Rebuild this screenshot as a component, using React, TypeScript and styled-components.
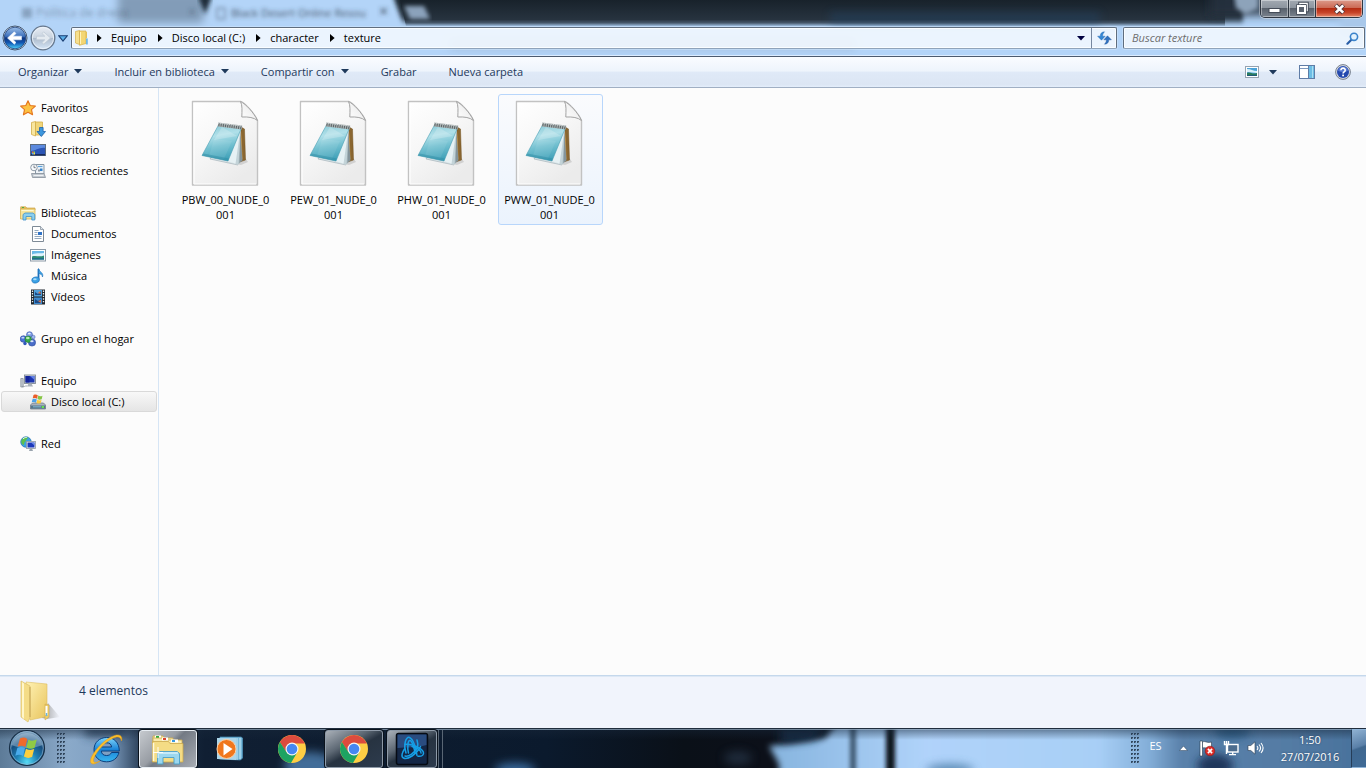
import React from 'react';
import styled, { createGlobalStyle, css } from 'styled-components';

const GlobalStyle = createGlobalStyle`
  *, *::before, *::after { box-sizing: border-box; }
  html, body { margin: 0; padding: 0; }
  body {
    font-family: "Open Sans", "Noto Sans", sans-serif;
    font-size: 11px;
    color: #000;
    background: #fcfcfc;
    overflow: hidden;
  }
  button {
    font: inherit; color: inherit; background: none; border: 0; padding: 0; margin: 0;
    display: inline-flex; align-items: center; justify-content: center; cursor: default;
  }
  svg { display: block; flex: none; }
  ul { list-style: none; margin: 0; padding: 0; }
`;

const Desktop = styled.div`
  display: flex;
  flex-direction: column;
  min-height: 100vh;
`;

/* ---------- glass frame ---------- */

const Backdrop = styled.svg`
  position: absolute;
  inset: 0;
  width: 100%;
  height: 100%;
`;

const GlassFrame = styled.header`
  position: relative;
  height: 57px;
  background: #b3d4f8;
  border-bottom: 1px solid #4c5a6e;
  overflow: hidden;
`;

const CaptionRow = styled.div`
  position: relative;
  display: flex;
  justify-content: flex-end;
  height: 26px;
  padding-right: 3px;
`;

const CaptionGroup = styled.div`
  display: flex;
  height: 18px;
  border: 1px solid #2f3742;
  border-top: 0;
  border-radius: 0 0 5px 5px;
  box-shadow: 0 0 0 1px rgba(255, 255, 255, 0.35);
  overflow: hidden;
`;

const CaptionButton = styled.button<{ $tone: 'glass' | 'close' }>`
  width: ${(p) => (p.$tone === 'close' ? 47 : 27)}px;
  box-shadow: inset 0 0 0 1px rgba(255, 255, 255, 0.4);
  background: ${(p) =>
    p.$tone === 'close'
      ? 'linear-gradient(#dc9a8a 0%, #cc6a55 45%, #b52c12 50%, #c8452a 75%, #e58a6c 100%)'
      : 'linear-gradient(#a2a9b2 0%, #8d959f 45%, #59616c 50%, #7a838e 100%)'};
  & + & { border-left: 1px solid #2f3742; }
`;

const NavRow = styled.div`
  position: relative;
  display: flex;
  align-items: center;
  height: 24px;
  padding: 0 1px 0 2px;
`;

const HistoryButtons = styled.div`
  display: flex;
  align-items: center;
  width: 69px;
  gap: 2px;
`;

const fieldBox = css`
  display: flex;
  align-items: center;
  height: 22px;
  border: 1px solid #5f6d7e;
  border-bottom-color: #8fa3ba;
  border-radius: 2px;
  background: rgba(243, 248, 254, 0.88);
  box-shadow: inset 0 0 0 1px #fafdff, 0 0 0 1px rgba(214, 234, 255, 0.45);
`;

const AddressBar = styled.nav`
  ${fieldBox}
  flex: 1;
  min-width: 0;
  padding-left: 2px;
`;

const Crumbs = styled.ol`
  display: flex;
  align-items: center;
  list-style: none;
  margin: 0 auto 0 7px;
  padding: 0 0 1px;
`;

const Crumb = styled.li`
  display: flex;
  align-items: center;
  gap: 9px;
  margin-right: 11px;
  white-space: nowrap;
`;

const DropButton = styled.button`
  width: 20px;
  height: 20px;
`;

const RefreshButton = styled.button`
  width: 25px;
  height: 20px;
  border-left: 1px solid #7687a0;
`;

const SearchBox = styled.label`
  ${fieldBox}
  width: 242px;
  margin-left: 6px;
  padding: 0 5px 0 8px;
`;

const SearchInput = styled.input`
  flex: 1;
  min-width: 0;
  border: 0;
  padding: 0 0 1px;
  background: transparent;
  font: italic 11px "Open Sans", "Noto Sans", sans-serif;
  color: #222;
  outline: none;
  &::placeholder { color: #6d6d6d; opacity: 1; }
`;

/* ---------- command bar ---------- */

const CommandBar = styled.div`
  display: flex;
  align-items: center;
  height: 31px;
  padding: 0 15px 0 18px;
  gap: 32px;
  color: #1e395b;
  background: linear-gradient(#fafcff 0%, #eef4fc 46%, #dfe9f7 52%, #dce6f4 92%, #e4eefb 100%);
  border-bottom: 1px solid #a0afc3;
`;

const Command = styled.button`
  gap: 6px;
  height: 24px;
  padding-bottom: 2px;
  white-space: nowrap;
`;

const ViewTools = styled.div`
  display: flex;
  align-items: center;
  margin-left: auto;
  gap: 20px;
`;

const ViewPicker = styled.div`
  display: flex;
  align-items: center;
  gap: 10px;
  margin-right: 2px;
`;

/* ---------- body ---------- */

const Body = styled.div`
  display: flex;
  flex: 1;
  min-height: 0;
  background: #fcfcfc;
`;

const Sidebar = styled.nav`
  width: 159px;
  padding-top: 9px;
  border-right: 1px solid #d6e5f5;
`;

const TreeGroup = styled.ul`
  margin-bottom: 21px;
`;

const TreeRow = styled.a<{ $child?: boolean; $selected?: boolean }>`
  display: flex;
  align-items: center;
  gap: 5px;
  height: 21px;
  margin: 0 1px;
  padding-left: ${(p) => (p.$child ? 28 : 18)}px;
  border: 1px solid ${(p) => (p.$selected ? '#d9d9d9' : 'transparent')};
  border-radius: 3px;
  background: ${(p) => (p.$selected ? 'linear-gradient(#f8f8f8, #e5e5e5)' : 'none')};
  color: #000;
  text-decoration: none;
  white-space: nowrap;
`;

const FileGrid = styled.main`
  display: flex;
  flex-wrap: wrap;
  align-content: flex-start;
  flex: 1;
  gap: 3px;
  padding: 6px 15px;
`;

const FileTile = styled.button<{ $hover?: boolean }>`
  flex-direction: column;
  justify-content: flex-start;
  width: 105px;
  height: 131px;
  padding: 5px 2px 0 0;
  gap: 5px;
  line-height: 15px;
  border: 1px solid ${(p) => (p.$hover ? '#b8d6fb' : 'transparent')};
  border-radius: 3px;
  background: ${(p) => (p.$hover ? 'linear-gradient(#fafbfd, #ebf3fd)' : 'none')};
`;

const DetailsPane = styled.footer`
  display: flex;
  align-items: flex-start;
  gap: 19px;
  height: 53px;
  padding: 4px 18px;
  background: #f1f4fc;
  border-top: 1px solid #c5d8ec;
  box-shadow: inset 0 1px 0 #dde8f5;
  color: #1e395b;
  font-size: 12px;
  line-height: 22px;
`;

/* ---------- taskbar ---------- */

const Taskbar = styled.div`
  position: relative;
  display: flex;
  align-items: center;
  height: 40px;
  background: #0b1522;
  overflow: hidden;
`;

const TaskbarRow = styled.div`
  position: relative;
  display: flex;
  align-items: center;
  flex: 1;
  height: 40px;
  padding-left: 8px;
`;

const TaskList = styled.div`
  display: flex;
  align-items: center;
  gap: 4px;
  margin-left: 11px;
`;

const TaskButton = styled.button<{ $state: 'idle' | 'open' | 'active'; $narrow?: boolean }>`
  width: ${(p) => (p.$narrow ? 50 : 58)}px;
  height: 38px;
  margin-top: 1px;
  border-radius: 3px;
  ${(p) =>
    p.$state !== 'idle' &&
    css`
      border: 1px solid ${p.$state === 'active' ? '#e6ecf2' : '#8e9aa8'};
      box-shadow: 0 0 0 1px #0a121c;
      background: ${p.$state === 'active'
        ? 'linear-gradient(135deg, #c5c9ce 0%, #989da4 42%, #737a84 50%, #a8adb4 100%)'
        : 'linear-gradient(150deg, #a9b0b8 0%, #5d6874 35%, #273341 52%, #2d3b4d 100%)'};
    `}
`;

const StackEdges = styled.div`
  width: 5px;
  height: 38px;
  margin: 1px 0 0 -3px;
  border: solid #596674;
  border-width: 0 1px;
`;

const Tray = styled.div`
  display: flex;
  align-items: center;
  margin-left: auto;
  color: #fff;
`;

const Language = styled.button`
  width: 31px;
  height: 30px;
  padding-bottom: 5px;
`;

const TrayButton = styled.button`
  width: 24px;
  height: 30px;
`;

const Clock = styled.time`
  width: 84px;
  text-align: center;
  line-height: 17px;
  padding-left: 2px;
  text-shadow: 0 0 2px rgba(20, 40, 70, 0.7);
`;

const ShowDesktop = styled.button`
  width: 15px;
  height: 39px;
  border: 1px solid #8fb4d8;
  border-left-color: #253d58;
  border-right: 0;
  background: linear-gradient(160deg, #8fb1d2 0%, #5a80a8 45%, #3f678f 50%, #3f6a96 100%);
`;

/* ---------- small glyphs ---------- */

const Down = ({ color = '#1e395b' }: { color?: string }) => (
  <svg width="8" height="5" viewBox="0 0 8 5"><path d="M0 0h8L4 4.6z" fill={color} /></svg>
);
const Right = () => (
  <svg width="5" height="8" viewBox="0 0 5 8"><path d="M0 0v8l4.6-4z" fill="#000" /></svg>
);

const gripRows = [0, 4, 8, 12, 16, 20, 24, 28];
const Grip = () => (
  <svg width="9" height="31" viewBox="0 0 9 31" aria-hidden="true">
    {gripRows.map((y) => (
      <g key={y}>
        <path d={`M0 ${y}h2v2h-2zM3 ${y}h2v2h-2zM6 ${y}h2v2h-2z`} fill="#22364c" opacity=".85" />
        <path d={`M1 ${y + 1}h1v1h-1zM4 ${y + 1}h1v1h-1zM7 ${y + 1}h1v1h-1z`} fill="#a9c0d8" opacity=".45" />
      </g>
    ))}
  </svg>
);

const BackIcon = () => (
  <svg width="26" height="26" viewBox="0 0 26 26">
    <defs>
      <linearGradient id="bk" x1="0" y1="0" x2="0" y2="1">
        <stop offset="0" stopColor="#9cbfe8" /><stop offset=".42" stopColor="#3e71bd" />
        <stop offset=".5" stopColor="#10367f" /><stop offset=".72" stopColor="#1157b3" /><stop offset="1" stopColor="#4fd2fb" />
      </linearGradient>
    </defs>
    <circle cx="13" cy="13" r="12" fill="#e6eef8" stroke="#42566f" />
    <circle cx="13" cy="13" r="10.8" fill="url(#bk)" stroke="#1d3f78" strokeWidth=".8" />
    <path d="M5.500 13l6.800-6.200 1.700 1.700-2.800 2.700h8.300v3.600h-8.300l2.800 2.700-1.700 1.700z" fill="#fff" stroke="#e7f2ff" strokeWidth=".6" strokeLinejoin="round" />
  </svg>
);

const ForwardIcon = () => (
  <svg width="26" height="26" viewBox="0 0 26 26">
    <defs>
      <linearGradient id="fw" x1="0" y1="0" x2="0" y2="1">
        <stop offset="0" stopColor="#e9eef5" /><stop offset=".48" stopColor="#c9d3df" />
        <stop offset=".52" stopColor="#aebccd" /><stop offset="1" stopColor="#d8e8f9" />
      </linearGradient>
    </defs>
    <circle cx="13" cy="13" r="11.8" fill="url(#fw)" stroke="#66778c" strokeWidth="1.300" />
    <circle cx="13" cy="13" r="10.600" fill="none" stroke="#edf4fb" strokeWidth=".8" />
    <path d="M20.500 13l-6.800-6.200-1.700 1.700 2.800 2.700H6.500v3.600h8.300L12 17.500l1.700 1.700z" fill="#e4eaf0" stroke="#bcc7d4" strokeWidth=".7" strokeLinejoin="round" />
  </svg>
);

const HistoryDrop = () => (
  <svg width="10" height="7" viewBox="0 0 10 7"><path d="M.8.8h8.4L5 6z" fill="#58aee8" stroke="#1b3f73" strokeWidth="1.100" /></svg>
);

const RefreshIcon = () => (
  <svg width="15" height="14" viewBox="0 0 15 14">
    <path d="M7.500.8C5.200.8 3.300 2.200 3.300 4.600V5.200H.6L4.500 9.200 8.200 5.200H5.600C5.600 3.500 6 2.500 7.500.8z" fill="#3487d4" stroke="#2366ab" strokeWidth=".4" />
    <path d="M7.500 13.200c2.300 0 4.200-1.400 4.200-3.800V8.800h2.700L10.500 4.800 6.800 8.800h2.600c0 1.700-.4 2.700-1.900 4.400z" fill="#2f72c0" stroke="#1f4f94" strokeWidth=".4" />
  </svg>
);

const MagnifierIcon = () => (
  <svg width="13" height="13" viewBox="0 0 13 13">
    <path d="M5.400 7.800L1.400 11.700" stroke="#2a5ea6" strokeWidth="2.200" strokeLinecap="round" />
    <circle cx="8" cy="4.800" r="3.600" fill="#e3f2fd" stroke="#3b83cb" strokeWidth="1.600" />
  </svg>
);

const ViewIcon = () => (
  <svg width="14" height="12" viewBox="0 0 14 12">
    <rect x=".5" y=".5" width="13" height="11" fill="#fff" stroke="#96a3b1" />
    <rect x="2" y="2" width="10" height="8" fill="#4ba2d8" />
    <path d="M2 3c4 0 6 2 10 2v2L2 6z" fill="#d8f0fa" />
    <path d="M2 7c3-2 5 2 10 0v3H2z" fill="#2b7a5a" /><path d="M2 9h10v1H2z" fill="#1e5a78" />
  </svg>
);

const PreviewIcon = () => (
  <svg width="16" height="14" viewBox="0 0 16 14">
    <rect x=".5" y=".5" width="15" height="13" fill="#fff" stroke="#5f7ca6" />
    <path d="M1 3.500h9" stroke="#7d98bd" /><rect x="10" y="1" width="5" height="12" fill="#6dbde4" />
    <path d="M9.500 1v12" stroke="#5f7ca6" /><path d="M13.500 1v12" stroke="#a9def3" />
  </svg>
);

const HelpIcon = () => (
  <svg width="16" height="16" viewBox="0 0 16 16">
    <circle cx="8" cy="8" r="7.400" fill="#d7dce4" stroke="#777f8d" />
    <circle cx="8" cy="8" r="6" fill="#2449ae" />
    <path d="M3 6.400a5.200 5.200 0 0 1 10 0C10 8.400 6 8.400 3 6.400z" fill="#6d8ee0" opacity=".7" />
    <path d="M5.900 6.300c0-3 4.400-2.800 4.300-.1 0 1.700-2.100 1.500-2.100 3.200" fill="none" stroke="#fff" strokeWidth="1.600" />
    <rect x="7.200" y="10.600" width="1.800" height="1.700" fill="#fff" />
  </svg>
);

/* ---------- tree icons ---------- */

const icons: Record<string, React.ReactNode> = {
  folder: (
    <>
      <path d="M1.500 1.500l4-1v14l-4-1.500z" fill="#f7e08e" stroke="#d3ae4a" strokeWidth=".7" />
      <path d="M5.500 1h6.500v12.500l-6.500 1.800z" fill="#f3d673" stroke="#d6b04c" strokeWidth=".7" />
      <path d="M6.500 2v12" stroke="#fff3bb" /><path d="M12 8.500h1.800v6H12z" fill="#70b7e4" />
      <path d="M12.500 2v6" stroke="#e1c05b" />
    </>
  ),
  star: (
    <path d="M8 .8l2.200 4.700 5.200.6-3.900 3.500 1.100 5.200L8 12.200l-4.600 2.600 1.100-5.200L.6 6.100l5.200-.6z" fill="#fcc243" stroke="#e5751d" strokeWidth="1.100" strokeLinejoin="round" />
  ),
  downloads: (
    <>
      <path d="M1.500 1.500l4-1v14.500l-4-1.500z" fill="#f8e69f" stroke="#d3ae4a" strokeWidth=".8" />
      <path d="M5.500 1h7v13h-7z" fill="#f1d67a" stroke="#d3ae4a" strokeWidth=".8" />
      <path d="M9.500 6.500h3.600v4h2.400L11.300 15.500 7 10.500h2.500z" fill="#3d97dd" stroke="#1c62ac" strokeWidth=".8" />
    </>
  ),
  desktop: (
    <>
      <rect x=".5" y="2.500" width="15" height="11" fill="#2b55b5" stroke="#5b6b7d" />
      <path d="M1 3h14v3C10 5 5 9 1 9z" fill="#5c8ade" /><path d="M1 12h14v1.500H1z" fill="#182c5e" />
      <path d="M2 9.500h1.500V11H2z" fill="#f06a35" /><path d="M3.500 9.500H5V11H3.500z" fill="#8fd257" />
      <path d="M2 11h1.500v1.500H2z" fill="#57b4f2" /><path d="M3.500 11H5v1.500H3.500z" fill="#f9d650" />
    </>
  ),
  recent: (
    <>
      <path d="M5.500 1.500h8.500v9.500H5.500z" fill="#eef3f8" stroke="#8795a3" />
      <path d="M8 3.500h4.500" stroke="#5ba3dd" strokeWidth="1.200" /><path d="M8 6.500h2v2H8z" fill="#8b98a5" /><path d="M10 5.500h2.500v2.500H10z" fill="#3482ca" />
      <path d="M1.500 10.500h12.500l1.500 4h-13z" fill="#c2c9d0" stroke="#858f9a" strokeWidth=".8" /><path d="M3.500 12.500h10" stroke="#eef1f4" />
      <circle cx="4" cy="4.500" r="3.300" fill="#f8fafc" stroke="#8d99a5" /><path d="M4 2.500v2.200h1.700" fill="none" stroke="#55606c" strokeWidth=".8" />
    </>
  ),
  libraries: (
    <>
      <path d="M.7 4V1.800h5L7 3h8v2z" fill="#e9c25c" stroke="#cda54a" strokeWidth=".7" />
      <path d="M.5 4h14.500v10H.5z" fill="#f8e49a" stroke="#d7b456" strokeWidth=".8" />
      <path d="M1.500 5.500h12" stroke="#fff8d1" /><path d="M2 2.500h2" stroke="#4eaa4a" />
      <path d="M3 15V9.500l2-1.500h8l1.800 1.500V15h-3v-3.500H6V15z" fill="#8ccfef" stroke="#3e91c9" strokeWidth=".8" />
    </>
  ),
  documents: (
    <>
      <path d="M2.500.5h8l3 3v12h-11z" fill="#fff" stroke="#7e8a96" /><path d="M10.500.5v3h3" fill="#dfe5eb" stroke="#7e8a96" strokeWidth=".7" />
      <path d="M4.500 4.500h4M4.500 6.500h3M4.500 8.500h3M4.500 10.500h7M4.500 12.500h7" stroke="#94a9be" /><path d="M8 6h4v3H8z" fill="#2f73c7" />
    </>
  ),
  pictures: (
    <>
      <rect x=".5" y="2.500" width="15" height="11.500" fill="#fff" stroke="#8c99a6" />
      <rect x="2" y="4" width="12" height="8.500" fill="#69b9e8" /><path d="M2 7.500c4-2 7-1 12-1.500v4H2z" fill="#dff3fc" />
      <path d="M2 9.500c4-1.500 7 1 12-1v4H2z" fill="#2e8b74" /><path d="M2 11.300h12v1.200H2z" fill="#1a6292" />
    </>
  ),
  music: (
    <>
      <path d="M8.500 1v10.500" stroke="#1d6fb9" strokeWidth="1.800" /><path d="M8.500.5c.8 3.800 5.500 4 4 8.500-.3-2.500-2-3-4-3.800z" fill="#3fa4e4" stroke="#1d6fb9" strokeWidth=".6" />
      <ellipse cx="5.600" cy="12" rx="3.900" ry="3" transform="rotate(-15 5.600 12)" fill="#3da3e6" stroke="#1d6fb9" strokeWidth=".6" />
      <ellipse cx="4.900" cy="11.200" rx="1.800" ry="1" fill="#a8dcf8" />
    </>
  ),
  videos: (
    <>
      <rect x="1" y=".5" width="14" height="15" fill="#20272e" /><rect x="4" y="1" width="8" height="6.500" fill="#4f9fd9" /><rect x="4" y="8.500" width="8" height="6.500" fill="#3d8bd0" />
      <path d="M5 3l3 2 3-3v4H5zM5 10l3 2 3-2v4H5z" fill="#1d4a86" /><path d="M8 4l2-2 1 3zM8 12l3-1v3z" fill="#d9784e" />
      <path d="M2.500 1.500v13M13.500 1.500v13" stroke="#e9edf0" strokeWidth="1.300" strokeDasharray="1.400 1.200" />
    </>
  ),
  homegroup: (
    <>
      <circle cx="9.500" cy="3.700" r="3" fill="#7d9be4" stroke="#3856a7" strokeWidth=".6" /><circle cx="3.500" cy="8" r="3.300" fill="#4a73d5" stroke="#2a4898" strokeWidth=".6" />
      <circle cx="13.300" cy="6" r="1.800" fill="#9fb7ee" stroke="#3856a7" strokeWidth=".5" /><circle cx="12" cy="11.500" r="3.600" fill="#4a6dc9" stroke="#2a4898" strokeWidth=".6" />
      <circle cx="8.200" cy="8.300" r="3.200" fill="#35a849" stroke="#1e7535" strokeWidth=".6" />
      <ellipse cx="7.800" cy="7" rx="1.800" ry="1.200" fill="#b4ecae" /><ellipse cx="9.300" cy="2.600" rx="1.500" ry=".9" fill="#e4ecfd" />
      <ellipse cx="2.900" cy="6.700" rx="1.500" ry=".9" fill="#c3d4f8" />
      <circle cx="5" cy="12.500" r="1.700" fill="#2f57bb" /><ellipse cx="11.900" cy="10.200" rx="1.700" ry="1" fill="#dce6fc" />
    </>
  ),
  computer: (
    <>
      <path d="M.8 5.500h2.400v8.500H.8z" fill="#c3cad1" stroke="#7e8891" strokeWidth=".7" /><rect x="4.500" y="2" width="11" height="8.500" fill="#d3d8dd" stroke="#818b95" strokeWidth=".9" />
      <rect x="5.500" y="3" width="9" height="6.500" fill="#1d36b0" /><path d="M5.500 3h4v6.500h-4z" fill="#13229b" /><path d="M10 3h4.500v4z" fill="#6381e5" />
      <path d="M8.500 10.500h3l1.500 3H7z" fill="#a8b0b8" /><path d="M2 13.500c2 1 3-1 5-.5" stroke="#8b949d" fill="none" strokeWidth=".8" />
    </>
  ),
  disk: (
    <>
      <path d="M2.500 9h11l2 2v4H.5v-4z" fill="#a9b2bb" stroke="#68737e" strokeWidth=".7" /><path d="M.8 11.500h14.400v3.200H.8z" fill="#56778c" />
      <path d="M3 12.800h8" stroke="#84b7cf" /><path d="M11.700 12h2.300v2h-2.300z" fill="#67e24e" />
      <path d="M3.500 1c2-.8 3-.5 4.300.3l-.8 3.500c-1.300-.8-2.400-1-4.300-.3z" fill="#ea5d2a" /><path d="M8.300 1.600c1.300.8 2.800.8 4.200.1l-.8 3.500c-1.600.7-2.900.5-4.200-.2z" fill="#86c544" />
      <path d="M2.500 5.200c1.900-.7 3-.4 4.300.3l-.8 3.300c-1.400-.8-2.500-.9-4.300-.3z" fill="#4ba2e7" /><path d="M7.300 5.800c1.400.7 2.700.8 4.200.1l-.8 3.300c-1.500.6-2.900.4-4.200-.2z" fill="#fbcb3d" />
    </>
  ),
  network: (
    <>
      <circle cx="6" cy="6" r="5.300" fill="#3c9fe3" stroke="#1b67a9" strokeWidth=".6" /><path d="M2 3.500c2-3 5-2 6-2-1 2-2 2-2.500 4C4 6 4.500 9 3.500 9 1 8 .8 5 2 3.500z" fill="#5cc04e" />
      <path d="M3 2.800c2-1.800 4-1.300 4-1.300" stroke="#e4fbe3" fill="none" />
      <rect x="6.500" y="5.500" width="9" height="7" fill="#eef1f5" stroke="#8e98a3" strokeWidth=".8" /><rect x="7.500" y="6.500" width="7" height="5" fill="#1c38bb" />
      <path d="M11 6.500h3.500v3z" fill="#6d8ce9" /><path d="M10 12.500h2l1 2.500H9z" fill="#9aa4ae" />
    </>
  ),
};

const TreeIcon = ({ name }: { name: string }) => (
  <svg width="16" height="16" viewBox="0 0 16 16">{icons[name]}</svg>
);

const NotepadFile = () => (
  <svg width="69" height="87" viewBox="0 0 69 87">
    <defs>
      <linearGradient id="pg" x1="0" y1="0" x2=".6" y2="1"><stop offset="0" stopColor="#fff" /><stop offset=".5" stopColor="#f7f7f7" /><stop offset="1" stopColor="#ebebeb" /></linearGradient>
      <linearGradient id="cv" x1=".3" y1="0" x2=".5" y2="1"><stop offset="0" stopColor="#8ccbd8" /><stop offset=".3" stopColor="#b0e0e9" /><stop offset=".6" stopColor="#74c1d1" /><stop offset="1" stopColor="#3c9fb7" /></linearGradient>
      <linearGradient id="fo" x1="0" y1="1" x2="1" y2="0"><stop offset="0" stopColor="#fff" /><stop offset=".6" stopColor="#f0f0f0" /><stop offset="1" stopColor="#cfcfcf" /></linearGradient>
    </defs>
    <path d="M1.500 1.500h48c4 1 14 12 17 19v64.500h-65z" fill="url(#pg)" stroke="#c2c2c2" strokeWidth="1.400" strokeLinejoin="round" />
    <path d="M3 3v81h62" fill="none" stroke="#fff" />
    <path d="M49.500 1.500c2 4 1.500 9 1.300 15.500 7-.3 12 .5 15.700 3.500C63 13 55 4 49.500 1.500z" fill="url(#fo)" stroke="#a3a3a3" strokeLinejoin="round" />
    <path d="M18 58l32 7 7-3-4-6z" fill="#c9c9c9" opacity=".8" />
    <path d="M50 27l3.500 2 1 31-6 2z" fill="#8a6630" stroke="#70501e" strokeWidth=".5" />
    <path d="M50.500 31l1 28-3 2z" fill="#b8904c" />
    <path d="M49 27l2.500 33.500-5 4z" fill="#84949b" />
    <path d="M48 27l-1 38-28-6 3-4z" fill="#d9e4e8" stroke="#9cabb2" strokeWidth=".6" />
    <path d="M49.500 29L47.500 64.500 36.500 61z" fill="#e6f1f4" />
    <path d="M49.500 29L48.500 64l-4 0z" fill="#b4c6cc" opacity=".7" />
    <path d="M27.500 25l22.500 4-13 32-26-5.500z" fill="url(#cv)" stroke="#4a9fb3" strokeWidth=".6" />
    <path d="M31 27l15 9-23 4z" fill="#fff" opacity=".2" />
    <path d="M23 39l18 2-8 18-15-3z" fill="#fff" opacity=".08" />
    <path d="M11 55.500l26 5.500 1-2.500-25.500-5z" fill="#328ea6" opacity=".5" />
    <path d="M27 24.500l24 3" stroke="#a9b0b1" strokeWidth="4" />
    <path d="M27.500 24.700l23 3" stroke="#5b6466" strokeWidth="3" strokeDasharray="1 1.200" />
    <path d="M27 23l23.500 3" stroke="#d5dadb" strokeWidth="1" strokeDasharray="1.200 1" />
  </svg>
);

const BigFolder = () => (
  <svg width="42" height="44" viewBox="0 0 42 44">
    <defs><linearGradient id="fd" x1="0" y1="0" x2="1" y2="1"><stop offset="0" stopColor="#fff2b4" /><stop offset="1" stopColor="#e8c45d" /></linearGradient>
      <linearGradient id="sh"><stop offset="0" stopColor="#777" stopOpacity=".7" /><stop offset="1" stopColor="#777" stopOpacity="0" /></linearGradient></defs>
    <path d="M24 38l6-15 12 14-13 2z" fill="url(#sh)" />
    <path d="M8 2l21 2v25l-2 8-15 3z" fill="url(#fd)" stroke="#ddbd61" strokeWidth=".6" />
    <path d="M27 24l4 1v12l-4 3z" fill="#edcc69" stroke="#caa548" strokeWidth=".5" />
    <path d="M28.500 26v9" stroke="#fff" strokeWidth="2" /><path d="M28.500 33v3" stroke="#68b5e2" strokeWidth="1.500" />
    <path d="M3 1l9 5v31l-2 5-7-5z" fill="#f4dc87" stroke="#dcc06c" strokeWidth=".7" /><path d="M4 2v35l2 2V3.500z" fill="#fff6ca" />
    <path d="M12 7v30" stroke="#b9984a" strokeWidth=".8" />
  </svg>
);

/* ---------- taskbar icons ---------- */

const StartOrb = () => (
  <svg width="38" height="38" viewBox="0 0 38 38">
    <defs><radialGradient id="orb" cx=".5" cy=".9" r=".9"><stop offset="0" stopColor="#56dcf5" /><stop offset=".35" stopColor="#1e80b4" /><stop offset=".65" stopColor="#174f80" /><stop offset="1" stopColor="#88a9c4" /></radialGradient></defs>
    <circle cx="19" cy="19" r="17.500" fill="url(#orb)" stroke="#172e45" strokeWidth="1.200" />
    <circle cx="19" cy="19" r="16.300" fill="none" stroke="#9ebfd8" strokeWidth=".8" opacity=".7" />
    <path d="M3.500 16a16 16 0 0 1 31 0c-9 4-22 4-31 0z" fill="#e6f2fb" opacity=".32" />
    <path d="M12 9.500c3-1.500 5-1 7.300.4l-2 8c-2.600-1.600-4.600-1.600-7.600-.4z" fill="#ef6a2c" /><path d="M20.400 10.500c2.600 1.700 5.300 1.400 8.400.1l-2.200 8.200c-3 1.300-5.700 1-8.200-.4z" fill="#8fca45" />
    <path d="M9.400 18.700c3-1.200 5-1.100 7.600.4l-2 8c-2.500-1.600-4.700-1.600-7.700-.4z" fill="#4aabeb" /><path d="M18 19.700c2.600 1.500 5.200 1.600 8.200.4l-2.100 8c-3 1.300-5.600 1-8.200-.5z" fill="#fdcf3e" />
  </svg>
);

const IEIcon = () => (
  <svg width="36" height="34" viewBox="0 0 36 34">
    <defs><linearGradient id="ie" x1="0" y1="0" x2="0" y2="1"><stop offset="0" stopColor="#7ed5fb" /><stop offset=".5" stopColor="#1b83d7" /><stop offset="1" stopColor="#38b6f0" /></linearGradient></defs>
    <path d="M31 20.500h-7.500c-1 2.200-2.600 3-5 3-3.200 0-5-1.700-5.200-4.500h18C31.300 10.500 26 5.500 18.700 5.500 11.500 5.500 6 10.500 6 17.700 6 25 11.300 29.800 18.600 29.800c6.300 0 10.800-3.400 12.400-9.300zM13.400 15c.5-2.800 2.300-4.200 5.200-4.200s4.700 1.400 5 4.200z" fill="url(#ie)" stroke="#0b3f7d" strokeWidth="1" />
    <path d="M33.500 9c1.500-5-2-8.500-10.500-4C13 10 2 24 2.500 29.500 3 33.500 8 32 12 29c-4 2-7 2-6.500-1C6 23 15 11 24.500 6.500c5-2.500 8-2 9 2.500z" fill="#fbc02d" stroke="#e29a12" strokeWidth=".5" />
  </svg>
);

const ExplorerIcon = () => (
  <svg width="34" height="32" viewBox="0 0 34 32">
    <path d="M2 3h10l1.500 2H22v4H2z" fill="#f6e6a0" stroke="#cba94d" strokeWidth=".8" /><path d="M4 2.500h6v3H4z" fill="#fff" /><path d="M5 3h3v2H5z" fill="#2fae43" />
    <path d="M2 5h10l1 2h18v5H2z" fill="#f8e9a9" stroke="#cba94d" strokeWidth=".8" /><path d="M11 4.500h6v3h-6z" fill="#fff" /><path d="M12 5h3v2h-3z" fill="#d94530" />
    <path d="M20 6.500h7v3h-7z" fill="#fff" /><path d="M21 7h3v2h-3z" fill="#3a9be0" />
    <path d="M1.500 8.500h16l1.500 2h13v18.500h-30.500z" fill="#f4dc85" stroke="#cba94d" strokeWidth=".8" /><path d="M2.500 10v18" stroke="#fffadc" strokeWidth="1.500" />
    <path d="M6.500 31V20.500l2.500-2h17l2.500 2V31h-5.500v-6.500H12V31z" fill="#9bd7ef" stroke="#489fc8" strokeWidth=".9" /><path d="M8 20h19" stroke="#ddf4fc" strokeWidth="1.300" />
    <path d="M7 14v11M2 19.500h10" stroke="#fff" strokeWidth=".9" />
  </svg>
);

const PlayerIcon = () => (
  <svg width="28" height="26" viewBox="0 0 28 26">
    <path d="M4 1h21l1.500 1v20l-2 2-21-1z" fill="#76b7d8" stroke="#4c93bb" strokeWidth=".7" /><path d="M1 2h19v22L1 23z" fill="#acd5e9" /><path d="M21 2v22M24 2v21" stroke="#c9ebf7" />
    <circle cx="10.500" cy="13" r="9.500" fill="#f0771d" stroke="#fbd1a8" /><path d="M7.500 7l9 6-9 6.500z" fill="#fff" />
  </svg>
);

const ChromeIcon = () => (
  <svg width="30" height="30" viewBox="0 0 30 30">
    <circle cx="15" cy="15" r="14" fill="#ffce44" />
    <path d="M2.900 8A14 14 0 0 1 27.100 8L27.600 9.500H15L9 18z" fill="#dc4b3e" />
    <path d="M2.900 8A14 14 0 0 0 14 29L20.300 18.300 9.500 18.300z" fill="#1da362" />
    <circle cx="15" cy="15" r="6.500" fill="#f5f5f5" /><circle cx="15" cy="15" r="5.300" fill="#4587f3" />
  </svg>
);

const BattleIcon = () => (
  <svg width="34" height="34" viewBox="0 0 34 34">
    <rect x="1.500" y="1.500" width="31" height="31" rx="2" fill="#142746" stroke="#060b14" strokeWidth="1.500" /><path d="M2.500 2.500h29V13c-11 3-20 2-29 3z" fill="#315a94" opacity=".75" />
    <g fill="none" stroke="#169fe6" strokeWidth="1.500" strokeLinecap="round">
      <path d="M11 21C8 13 11 4 14.500 5.500c3.500 1.500 6.500 10 7.500 18" /><path d="M13.500 21c-1.500-6-.5-13 1.500-12.500s4.500 7.500 5 13" />
      <path d="M10 12.500c9-1 19 5 18.500 9-.4 2.500-3 3-5.500 2.800" /><path d="M17 14.500c6 1.500 9.500 4.500 9 6.500" />
      <path d="M25.500 14.500c-4 8-13 13.500-17 11.500-3-1.500-1-6 1-9" /><path d="M22.500 15.500c-3.500 6-9 9.500-12.500 8.500" />
      <path d="M22 8c1 3 1 5 .5 7.500" />
    </g>
  </svg>
);

const FlagIcon = () => (
  <svg width="17" height="17" viewBox="0 0 17 17">
    <path d="M1 1h2.500v15H1z" fill="#fff" stroke="#26394e" strokeWidth=".6" /><path d="M3.500 2c3-1.500 4 1.500 9 0v6c-4 1.500-6-1-9 0z" fill="#fff" stroke="#26394e" strokeWidth=".6" />
    <circle cx="11" cy="11" r="4.800" fill="#df2f2b" stroke="#8c1716" strokeWidth=".6" /><path d="M8.900 8.900l4.200 4.200M13.100 8.900l-4.200 4.200" stroke="#fff" strokeWidth="1.700" />
  </svg>
);

const NetIcon = () => (
  <svg width="16" height="16" viewBox="0 0 16 16">
    <rect x="4.500" y="4.500" width="10.500" height="7.500" fill="#4c6c8e" stroke="#fff" strokeWidth="1.400" /><path d="M9.700 12v2M6 14.600h7" stroke="#fff" strokeWidth="1.400" />
    <path d="M1.500 1v3.500h4V1M3.500 1v3M3.500 4.500V14" fill="none" stroke="#fff" strokeWidth="1.400" />
  </svg>
);

const VolumeIcon = () => (
  <svg width="17" height="14" viewBox="0 0 17 14">
    <path d="M1 4.500h2.800L8 .8v12.400L3.800 9.500H1z" fill="#fff" stroke="#26394e" strokeWidth=".6" />
    <path d="M10 5c.9 1 .9 3 0 4M12 3.500c1.800 2 1.800 5 0 7M14 2c2.500 3 2.500 7 0 10" fill="none" stroke="#fff" strokeWidth="1.100" />
  </svg>
);

const FrameBackdrop = () => (
  <Backdrop viewBox="0 0 1366 56" preserveAspectRatio="none" aria-hidden="true">
    <defs>
      <linearGradient id="dk" x1="0" y1="0" x2="0" y2="1"><stop offset="0" stopColor="#18222b" /><stop offset=".75" stopColor="#27333f" /><stop offset=".88" stopColor="#46586b" /><stop offset="1" stopColor="#9ab9da" stopOpacity=".9" /></linearGradient>
      <filter id="b2" x="-30%" y="-60%" width="160%" height="220%"><feGaussianBlur stdDeviation="4" /></filter>
      <filter id="b1" x="-5%" y="-60%" width="110%" height="220%"><feGaussianBlur stdDeviation="2.200" /></filter>
    </defs>
    <rect width="1366" height="56" fill="#b3d4f8" />
    <path d="M118-8h92l-8 31h-84z" fill="#829cb8" filter="url(#b2)" />
    <path d="M198-4h14l-7 18z" fill="#1c2b39" filter="url(#b1)" />
    <path d="M393-4h850v28H403z" fill="url(#dk)" filter="url(#b1)" />
    <path d="M400 0h825v26H406z" fill="url(#dk)" />
    <path d="M1210-10h140v26h-140z" fill="#27333f" opacity=".8" filter="url(#b2)" />
    <rect x="830" y="12" width="270" height="12" fill="#23466b" opacity=".4" filter="url(#b2)" />
    <path d="M404 6h20l6 13h-20z" fill="#8ba2bb" filter="url(#b1)" />
    <path d="M1234-6h24v14l-12 6-10-6z" fill="#8da3ba" filter="url(#b1)" />
    <path d="M1340-10h40v46h-40z" fill="#a9c8ea" filter="url(#b2)" />
    <g filter="url(#b1)" fontFamily="Open Sans, sans-serif" fontSize="12" fill="#354252">
      <text x="36" y="17" opacity=".45">Política de dreos</text>
      <text x="231" y="17" fontSize="11" opacity=".9">Black Desert Online Resou</text>
      <text x="379" y="17" fontSize="16">×</text><text x="188" y="17" fontSize="14" opacity=".5">×</text>
      <path d="M22 8h10v10H22z" opacity=".35" /><path d="M217 8h8v11h-8z" fill="none" stroke="#52647a" />
    </g>
    <rect x="450" y="39" width="405" height="10" fill="#8a95a7" opacity=".35" filter="url(#b2)" />
    <rect y="55" width="1366" height="1" fill="#dcecff" />
  </Backdrop>
);

const TaskbarBackdrop = () => (
  <Backdrop viewBox="0 0 1366 40" preserveAspectRatio="none" aria-hidden="true">
    <defs>
      <linearGradient id="tb">
        <stop offset="0" stopColor="#5d7b98" /><stop offset=".05" stopColor="#8aa9c9" /><stop offset=".08" stopColor="#7f9fc2" /><stop offset=".105" stopColor="#22364e" />
        <stop offset=".15" stopColor="#101f33" /><stop offset=".4" stopColor="#0b1a2d" /><stop offset=".5" stopColor="#0a1018" /><stop offset=".56" stopColor="#0c1019" />
      </linearGradient>
      <linearGradient id="tr"><stop offset="0" stopColor="#86b4de" /><stop offset=".25" stopColor="#b0d3fa" /><stop offset=".52" stopColor="#a8cff6" /><stop offset=".6" stopColor="#83aed8" /><stop offset=".65" stopColor="#5a81aa" /><stop offset=".82" stopColor="#537ba4" /><stop offset="1" stopColor="#426b96" /></linearGradient>
      <linearGradient id="shade" x1="0" y1="0" x2="0" y2="1"><stop offset="0" stopColor="#17273a" stopOpacity=".55" /><stop offset=".3" stopColor="#17273a" stopOpacity="0" /></linearGradient>
      <filter id="b5" x="-50%" y="-80%" width="200%" height="260%"><feGaussianBlur stdDeviation="5" /></filter>
      <filter id="b6" x="-10%" y="-30%" width="120%" height="160%"><feGaussianBlur stdDeviation="3" /></filter>
      <filter id="b7" x="-100%" y="-10%" width="300%" height="120%"><feGaussianBlur stdDeviation="2" /></filter>
    </defs>
    <rect width="1366" height="40" fill="url(#tb)" />
    <ellipse cx="310" cy="38" rx="26" ry="14" fill="#426d99" filter="url(#b5)" />
    <ellipse cx="515" cy="42" rx="20" ry="7" fill="#3b6b9d" filter="url(#b5)" />
    <path d="M85-5h40v14H85z" fill="#203650" opacity=".7" filter="url(#b5)" />
    <path d="M779 60V36l-10-18 26-3 30-5 18-22h560v72z" fill="url(#tr)" filter="url(#b6)" />
    <path d="M780 0h46l-12 12-34 3z" fill="#173150" opacity=".8" filter="url(#b5)" />
    <ellipse cx="950" cy="42" rx="24" ry="6" fill="#42759e" opacity=".75" filter="url(#b5)" />
    <ellipse cx="738" cy="30" rx="14" ry="7" fill="#31455b" opacity=".5" filter="url(#b5)" />
    <rect x="850" y="-10" width="6" height="60" fill="#3d566f" filter="url(#b7)" />
    <rect x="886" y="-10" width="9" height="60" fill="#0c151e" filter="url(#b7)" />
    <ellipse cx="1215" cy="38" rx="18" ry="12" fill="#122c50" opacity=".85" filter="url(#b5)" />
    <ellipse cx="1232" cy="4" rx="18" ry="7" fill="#28567e" opacity=".8" filter="url(#b5)" />
    <rect width="1366" height="40" fill="url(#shade)" />
    <rect width="1366" height="1" fill="#202d3d" /><rect y="1" width="1366" height="1" fill="#a5bacf" opacity=".65" />
  </Backdrop>
);

/* ---------- data ---------- */

type Node = { icon: string; label: string; selected?: boolean };
const tree: { head: Node; items: Node[] }[] = [
  { head: { icon: 'star', label: 'Favoritos' }, items: [
    { icon: 'downloads', label: 'Descargas' }, { icon: 'desktop', label: 'Escritorio' }, { icon: 'recent', label: 'Sitios recientes' } ] },
  { head: { icon: 'libraries', label: 'Bibliotecas' }, items: [
    { icon: 'documents', label: 'Documentos' }, { icon: 'pictures', label: 'Imágenes' }, { icon: 'music', label: 'Música' }, { icon: 'videos', label: 'Vídeos' } ] },
  { head: { icon: 'homegroup', label: 'Grupo en el hogar' }, items: [] },
  { head: { icon: 'computer', label: 'Equipo' }, items: [{ icon: 'disk', label: 'Disco local (C:)', selected: true }] },
  { head: { icon: 'network', label: 'Red' }, items: [] },
];

const commands = [
  { label: 'Organizar', menu: true }, { label: 'Incluir en biblioteca', menu: true }, { label: 'Compartir con', menu: true },
  { label: 'Grabar', menu: false }, { label: 'Nueva carpeta', menu: false },
];

const crumbs = ['Equipo', 'Disco local (C:)', 'character', 'texture'];
const files = ['PBW_00_NUDE_0', 'PEW_01_NUDE_0', 'PHW_01_NUDE_0', 'PWW_01_NUDE_0'];

export default function App() {
  return (
    <>
      <GlobalStyle />
      <Desktop>
        <GlassFrame>
          <FrameBackdrop />
          <CaptionRow>
            <CaptionGroup>
              <CaptionButton $tone="glass" aria-label="Minimizar">
                <svg width="13" height="17" viewBox="0 0 13 17"><rect x="1" y="8.500" width="11" height="4" fill="#fff" stroke="#454c58" /></svg>
              </CaptionButton>
              <CaptionButton $tone="glass" aria-label="Restaurar">
                <svg width="13" height="15" viewBox="0 0 13 15">
                  <path d="M4 2.500h7v7H4z" fill="none" stroke="#454c58" strokeWidth="3.500" /><path d="M4 2.500h7v7H4z" fill="none" stroke="#fff" strokeWidth="1.600" />
                  <path d="M2 5h7v7H2z" fill="#5a626e" stroke="#454c58" strokeWidth="3.500" /><path d="M2 5h7v7H2z" fill="#5a626e" stroke="#fff" strokeWidth="2" />
                </svg>
              </CaptionButton>
              <CaptionButton $tone="close" aria-label="Cerrar">
                <svg width="13" height="12" viewBox="0 0 13 12">
                  <path d="M2.500 2l8 8M10.500 2l-8 8" stroke="#5a3a3d" strokeWidth="4.500" /><path d="M2.800 2.300l7.400 7.400M10.200 2.300l-7.400 7.400" stroke="#fff" strokeWidth="2.600" />
                </svg>
              </CaptionButton>
            </CaptionGroup>
          </CaptionRow>
          <NavRow>
            <HistoryButtons>
              <button aria-label="Atrás"><BackIcon /></button>
              <button aria-label="Adelante"><ForwardIcon /></button>
              <button aria-label="Páginas recientes"><HistoryDrop /></button>
            </HistoryButtons>
            <AddressBar aria-label="Dirección">
              <TreeIcon name="folder" />
              <Crumbs>
                {crumbs.map((c) => (
                  <Crumb key={c}><Right /><button>{c}</button></Crumb>
                ))}
              </Crumbs>
              <DropButton aria-label="Ubicaciones anteriores"><Down color="#000040" /></DropButton>
              <RefreshButton aria-label="Actualizar"><RefreshIcon /></RefreshButton>
            </AddressBar>
            <SearchBox>
              <SearchInput type="text" placeholder="Buscar texture" aria-label="Buscar texture" />
              <MagnifierIcon />
            </SearchBox>
          </NavRow>
        </GlassFrame>

        <CommandBar>
          {commands.map((c) => (
            <Command key={c.label}>{c.label}{c.menu && <Down />}</Command>
          ))}
          <ViewTools>
            <ViewPicker>
              <button aria-label="Cambiar la vista"><ViewIcon /></button>
              <button aria-label="Más opciones"><Down /></button>
            </ViewPicker>
            <button aria-label="Panel de vista previa"><PreviewIcon /></button>
            <button aria-label="Ayuda"><HelpIcon /></button>
          </ViewTools>
        </CommandBar>

        <Body>
          <Sidebar aria-label="Navegación">
            {tree.map((g) => (
              <TreeGroup key={g.head.label}>
                <li><TreeRow href="#"><TreeIcon name={g.head.icon} />{g.head.label}</TreeRow></li>
                {g.items.map((n) => (
                  <li key={n.label}>
                    <TreeRow href="#" $child $selected={n.selected}><TreeIcon name={n.icon} />{n.label}</TreeRow>
                  </li>
                ))}
              </TreeGroup>
            ))}
          </Sidebar>
          <FileGrid>
            {files.map((f, i) => (
              <FileTile key={f} $hover={i === files.length - 1}>
                <NotepadFile />
                <span>{f}<br />001</span>
              </FileTile>
            ))}
          </FileGrid>
        </Body>

        <DetailsPane>
          <BigFolder />
          <span>4 elementos</span>
        </DetailsPane>

        <Taskbar>
          <TaskbarBackdrop />
          <TaskbarRow>
            <button aria-label="Inicio"><StartOrb /></button>
            <TaskList>
              <Grip />
            </TaskList>
            <TaskList>
              <TaskButton $state="idle" aria-label="Internet Explorer"><IEIcon /></TaskButton>
              <TaskButton $state="active" aria-label="Explorador de Windows"><ExplorerIcon /></TaskButton>
              <TaskButton $state="idle" aria-label="Reproductor"><PlayerIcon /></TaskButton>
              <TaskButton $state="idle" aria-label="Chrome"><ChromeIcon /></TaskButton>
              <TaskButton $state="open" aria-label="Chrome, ventana"><ChromeIcon /></TaskButton>
              <TaskButton $state="open" $narrow aria-label="Battle.net"><BattleIcon /></TaskButton>
              <StackEdges />
            </TaskList>
            <Tray>
              <Grip />
              <Language>ES</Language>
              <TrayButton aria-label="Mostrar iconos ocultos">
                <svg width="9" height="6" viewBox="0 0 9 6"><path d="M.5 5.500L4.500 1l4 4.500z" fill="#fff" stroke="#2b4159" strokeWidth=".5" /></svg>
              </TrayButton>
              <TrayButton aria-label="Centro de actividades"><FlagIcon /></TrayButton>
              <TrayButton aria-label="Red"><NetIcon /></TrayButton>
              <TrayButton aria-label="Volumen"><VolumeIcon /></TrayButton>
              <Clock>1:50<br />27/07/2016</Clock>
              <ShowDesktop aria-label="Mostrar escritorio" />
            </Tray>
          </TaskbarRow>
        </Taskbar>
      </Desktop>
    </>
  );
}
